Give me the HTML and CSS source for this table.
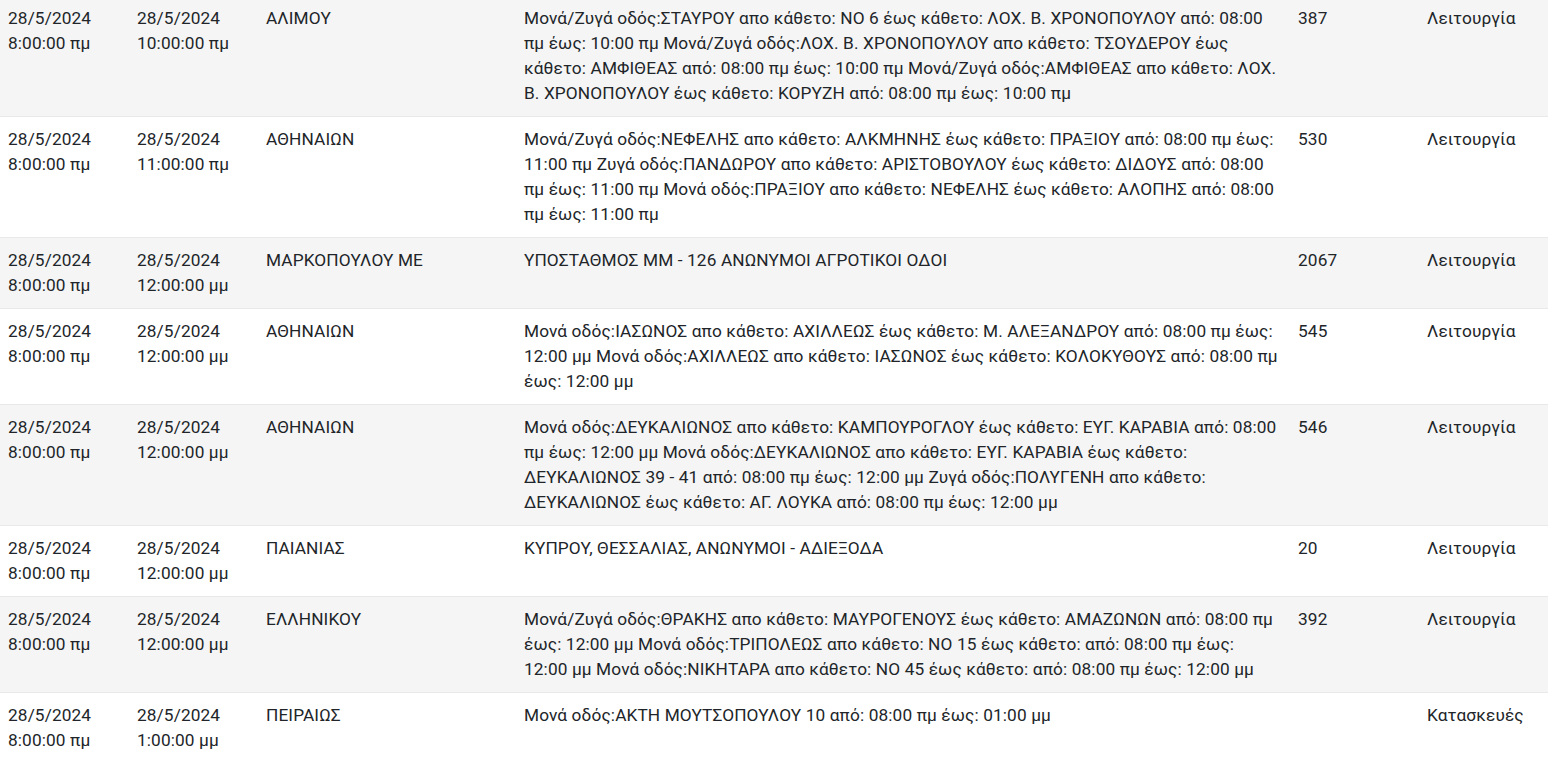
FILE: index.html
```html
<!DOCTYPE html>
<html lang="el">
<head>
    <meta charset="UTF-8">
    <meta name="viewport" content="width=device-width, initial-scale=1.0">
    <title>Διακοπές ρεύματος</title>
    <link rel="stylesheet" href="styles.css">
</head>
<body>

    <div class="table-wrap">
        <table class="outages">
            <colgroup>
                <col class="col-sm">
                <col class="col-sm">
                <col class="col-md">
                <col class="col-lg">
                <col class="col-sm">
                <col class="col-sm">
            </colgroup>
            <tbody>
                <tr>
                    <td>28/5/2024 8:00:00 πμ</td>
                    <td>28/5/2024 10:00:00 πμ</td>
                    <td>ΑΛΙΜΟΥ</td>
                    <td class="desc">Μονά/Ζυγά οδός:ΣΤΑΥΡΟΥ απο κάθετο: ΝΟ 6 έως κάθετο: ΛΟΧ. Β. ΧΡΟΝΟΠΟΥΛΟΥ από: 08:00 πμ έως: 10:00 πμ Μονά/Ζυγά οδός:ΛΟΧ. Β. ΧΡΟΝΟΠΟΥΛΟΥ απο κάθετο: ΤΣΟΥΔΕΡΟΥ έως κάθετο: ΑΜΦΙΘΕΑΣ από: 08:00 πμ έως: 10:00 πμ Μονά/Ζυγά οδός:ΑΜΦΙΘΕΑΣ απο κάθετο: ΛΟΧ. Β. ΧΡΟΝΟΠΟΥΛΟΥ έως κάθετο: ΚΟΡΥΖΗ από: 08:00 πμ έως: 10:00 πμ</td>
                    <td>387</td>
                    <td>Λειτουργία</td>
                </tr>
                <tr>
                    <td>28/5/2024 8:00:00 πμ</td>
                    <td>28/5/2024 11:00:00 πμ</td>
                    <td>ΑΘΗΝΑΙΩΝ</td>
                    <td class="desc">Μονά/Ζυγά οδός:ΝΕΦΕΛΗΣ απο κάθετο: ΑΛΚΜΗΝΗΣ έως κάθετο: ΠΡΑΞΙΟΥ από: 08:00 πμ έως: 11:00 πμ Ζυγά οδός:ΠΑΝΔΩΡΟΥ απο κάθετο: ΑΡΙΣΤΟΒΟΥΛΟΥ έως κάθετο: ΔΙΔΟΥΣ από: 08:00 πμ έως: 11:00 πμ Μονά οδός:ΠΡΑΞΙΟΥ απο κάθετο: ΝΕΦΕΛΗΣ έως κάθετο: ΑΛΟΠΗΣ από: 08:00 πμ έως: 11:00 πμ</td>
                    <td>530</td>
                    <td>Λειτουργία</td>
                </tr>
                <tr>
                    <td>28/5/2024 8:00:00 πμ</td>
                    <td>28/5/2024 12:00:00 μμ</td>
                    <td>ΜΑΡΚΟΠΟΥΛΟΥ ΜΕ</td>
                    <td class="desc">ΥΠΟΣΤΑΘΜΟΣ ΜΜ - 126 ΑΝΩΝΥΜΟΙ ΑΓΡΟΤΙΚΟΙ ΟΔΟΙ</td>
                    <td>2067</td>
                    <td>Λειτουργία</td>
                </tr>
                <tr>
                    <td>28/5/2024 8:00:00 πμ</td>
                    <td>28/5/2024 12:00:00 μμ</td>
                    <td>ΑΘΗΝΑΙΩΝ</td>
                    <td class="desc">Μονά οδός:ΙΑΣΩΝΟΣ απο κάθετο: ΑΧΙΛΛΕΩΣ έως κάθετο: Μ. ΑΛΕΞΑΝΔΡΟΥ από: 08:00 πμ έως: 12:00 μμ Μονά οδός:ΑΧΙΛΛΕΩΣ απο κάθετο: ΙΑΣΩΝΟΣ έως κάθετο: ΚΟΛΟΚΥΘΟΥΣ από: 08:00 πμ έως: 12:00 μμ</td>
                    <td>545</td>
                    <td>Λειτουργία</td>
                </tr>
                <tr>
                    <td>28/5/2024 8:00:00 πμ</td>
                    <td>28/5/2024 12:00:00 μμ</td>
                    <td>ΑΘΗΝΑΙΩΝ</td>
                    <td class="desc">Μονά οδός:ΔΕΥΚΑΛΙΩΝΟΣ απο κάθετο: ΚΑΜΠΟΥΡΟΓΛΟΥ έως κάθετο: ΕΥΓ. ΚΑΡΑΒΙΑ από: 08:00 πμ έως: 12:00 μμ Μονά οδός:ΔΕΥΚΑΛΙΩΝΟΣ απο κάθετο: ΕΥΓ. ΚΑΡΑΒΙΑ έως κάθετο: ΔΕΥΚΑΛΙΩΝΟΣ 39 - 41 από: 08:00 πμ έως: 12:00 μμ Ζυγά οδός:ΠΟΛΥΓΕΝΗ απο κάθετο: ΔΕΥΚΑΛΙΩΝΟΣ έως κάθετο: ΑΓ. ΛΟΥΚΑ από: 08:00 πμ έως: 12:00 μμ</td>
                    <td>546</td>
                    <td>Λειτουργία</td>
                </tr>
                <tr>
                    <td>28/5/2024 8:00:00 πμ</td>
                    <td>28/5/2024 12:00:00 μμ</td>
                    <td>ΠΑΙΑΝΙΑΣ</td>
                    <td class="desc">ΚΥΠΡΟΥ, ΘΕΣΣΑΛΙΑΣ, ΑΝΩΝΥΜΟΙ - ΑΔΙΕΞΟΔΑ</td>
                    <td>20</td>
                    <td>Λειτουργία</td>
                </tr>
                <tr>
                    <td>28/5/2024 8:00:00 πμ</td>
                    <td>28/5/2024 12:00:00 μμ</td>
                    <td>ΕΛΛΗΝΙΚΟΥ</td>
                    <td class="desc">Μονά/Ζυγά οδός:ΘΡΑΚΗΣ απο κάθετο: ΜΑΥΡΟΓΕΝΟΥΣ έως κάθετο: ΑΜΑΖΩΝΩΝ από: 08:00 πμ έως: 12:00 μμ Μονά οδός:ΤΡΙΠΟΛΕΩΣ απο κάθετο: ΝΟ 15 έως κάθετο: από: 08:00 πμ έως: 12:00 μμ Μονά οδός:ΝΙΚΗΤΑΡΑ απο κάθετο: ΝΟ 45 έως κάθετο: από: 08:00 πμ έως: 12:00 μμ</td>
                    <td>392</td>
                    <td>Λειτουργία</td>
                </tr>
                <tr>
                    <td>28/5/2024 8:00:00 πμ</td>
                    <td>28/5/2024 1:00:00 μμ</td>
                    <td>ΠΕΙΡΑΙΩΣ</td>
                    <td class="desc">Μονά οδός:ΑΚΤΗ ΜΟΥΤΣΟΠΟΥΛΟΥ 10 από: 08:00 πμ έως: 01:00 μμ</td>
                    <td></td>
                    <td>Κατασκευές</td>
                </tr>
            </tbody>
        </table>
    </div>

</body>
</html>
```

FILE: styles.css
```css
/* Basic reset */
* {
    margin: 0;
    padding: 0;
    box-sizing: border-box;
}

html,
body {
    overflow: hidden;
}

body {
    font-family: Roboto, 'Noto Sans', sans-serif;
    font-size: 17.25px;
    line-height: 25px;
    letter-spacing: 0.12px;
    color: #212529;
    background-color: #fff;
}

/* page is scrolled a few pixels down in the capture */
.table-wrap {
    margin-top: -5px;
}

.outages {
    width: 100%;
    border-collapse: collapse;
    table-layout: fixed;
}

.outages .col-sm {
    width: 8.3333%;
}

.outages .col-md {
    width: 16.6667%;
}

.outages .col-lg {
    width: 50%;
}

.outages td {
    padding: 10px 8px;
    vertical-align: top;
    text-align: left;
    border-top: 1px solid #e9e9e9;
}

.outages td.desc {
    padding-right: 12px;
}

.outages tr:nth-child(odd) td {
    background-color: #f5f5f5;
}
```
